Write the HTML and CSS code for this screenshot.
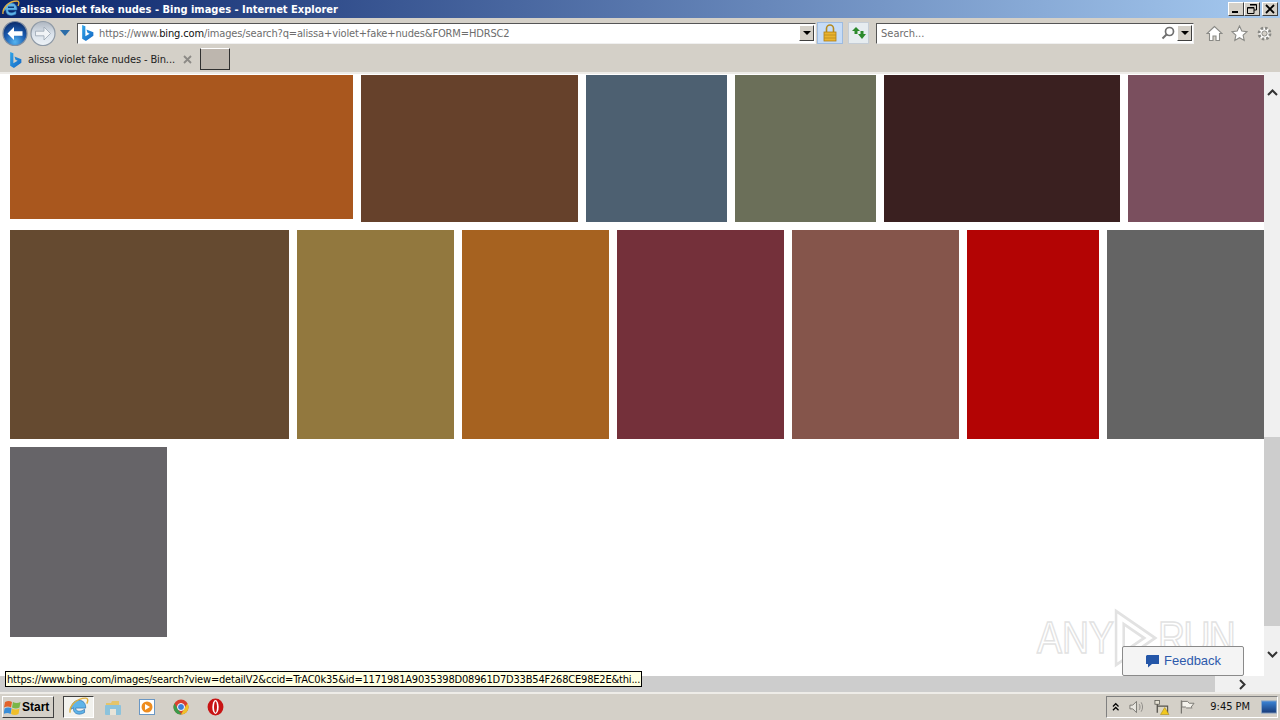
FILE: index.html
```html
<!DOCTYPE html>
<html lang="en">
<head>
<meta charset="utf-8">
<title>alissa violet fake nudes - Bing images - Internet Explorer</title>
<link rel="stylesheet" href="styles.css">
</head>
<body>
<div class="window">
  <header class="titlebar">
    <svg class="ie-small" width="18" height="18" viewBox="0 0 18 18"><path d="M2 11c0-5 3-8 7-8s6 3 6 6v1H6c0 3 4 4 8 1v3c-5 3-10 1-10-3 0-.5 0-1 .1-1.300z" fill="#5fb4e8" stroke="#2a6fb0" stroke-width=".6"/><path d="M1 14C0 8 7 1 15 1c2 0 2.500 2 1 5" fill="none" stroke="#e0b040" stroke-width="1.300"/><rect x="6" y="6.500" width="6" height="1.500" fill="#0a3a78"/></svg>
    <span class="title-text">alissa violet fake nudes - Bing images - Internet Explorer</span>
    <div class="win-btns">
      <button class="win-btn"><span class="g-min"></span></button>
      <button class="win-btn"><svg width="10" height="10" viewBox="0 0 10 10"><path d="M3 .5h6.500v5.500H7M.5 3.500H7V9.500H.5z" fill="none" stroke="#000" stroke-width="1"/><path d="M3 1h6.500M.5 4H7" stroke="#000" stroke-width="1"/></svg></button>
      <button class="win-btn win-close"><svg width="10" height="10" viewBox="0 0 10 10"><path d="M1 1l8 8M9 1l-8 8" stroke="#000" stroke-width="1.800"/></svg></button>
    </div>
  </header>

  <div class="navbar">
    <div class="nav-arrows">
      <svg class="nav-back" width="26" height="27" viewBox="0 0 26 27"><defs><radialGradient id="bk" cx=".5" cy=".85" r=".8"><stop offset="0" stop-color="#55b4f0"/><stop offset=".55" stop-color="#1b5cb0"/><stop offset="1" stop-color="#0c2f70"/></radialGradient></defs><circle cx="13" cy="13.500" r="12" fill="url(#bk)" stroke="#7f8da0" stroke-width="1.200"/><path d="M5.500 13.500l6.500-6.500v4.200h8.500v4.600H12V20z" fill="#fff"/></svg>
      <svg class="nav-fwd" width="26" height="27" viewBox="0 0 26 27"><defs><linearGradient id="fw" x1="0" y1="0" x2="0" y2="1"><stop offset="0" stop-color="#aeb6c0"/><stop offset=".5" stop-color="#d9e1ea"/><stop offset="1" stop-color="#eef3f7"/></linearGradient></defs><circle cx="13" cy="13.500" r="12" fill="url(#fw)" stroke="#8f9aa6" stroke-width="1.200"/><path d="M20.500 13.500L14 7v4.200H5.500v4.600H14V20z" fill="#f0f3f6" stroke="#9aa6b2" stroke-width=".8"/></svg>
      <svg class="nav-drop" width="10" height="6" viewBox="0 0 10 6"><path d="M0 0h10L5 6z" fill="#2b6ca8"/></svg>
    </div>
    <div class="addr">
      <svg class="bing" width="13" height="16" viewBox="0 0 12 15"><defs><linearGradient id="bg1" x1="0" y1="0" x2="1" y2="1"><stop offset="0" stop-color="#2fa4e8"/><stop offset="1" stop-color="#1668c4"/></linearGradient></defs><path d="M1 0l3 1.200v9.300l4-2.300-2-1-1-3 6.500 2.600v3.200L4.500 15 1 13z" fill="url(#bg1)"/></svg>
      <span class="url"><span class="dim">https://www.</span><span class="dark">bing.com</span><span class="dim">/images/search?q=alissa+violet+fake+nudes&amp;FORM=HDRSC2</span></span>
      <button class="drop-btn"><span class="tri"></span></button>
    </div>
    <div class="lock">
      <svg width="14" height="18" viewBox="0 0 14 18"><path d="M3.500 8V4.500a3.500 3.500 0 0 1 7 0V8" fill="none" stroke="#b48a20" stroke-width="1.600"/><rect x="1" y="8" width="12" height="9" fill="#eab32e" stroke="#b07e14" stroke-width=".8"/><path d="M1 11h12M1 14h12" stroke="#b98a1e" stroke-width=".8"/></svg>
    </div>
    <div class="refresh">
      <svg width="16" height="14" viewBox="0 0 16 14"><path d="M5 1L1 5h2.500v3h3V5H9z" fill="#2c8a2c"/><path d="M11 13l4-5h-2.500V5h-3v3H7z" fill="#2c8a2c"/></svg>
    </div>
    <div class="search">
      <span class="search-text">Search...</span>
      <svg class="mag" width="14" height="14" viewBox="0 0 14 14"><circle cx="8.500" cy="5.500" r="4" fill="none" stroke="#6f6f6f" stroke-width="1.700"/><path d="M5.500 8.500L1.500 12.500" stroke="#6f6f6f" stroke-width="2"/></svg>
      <button class="drop-btn"><span class="tri"></span></button>
    </div>
    <div class="tools">
      <svg width="17" height="17" viewBox="0 0 17 17"><path d="M8.500 1.500L1 8.500h2.500v7h3.500v-4.500h3v4.500h3.500v-7H16z" fill="#fff" stroke="#8a8a86" stroke-width="1.100"/></svg>
      <svg width="17" height="17" viewBox="0 0 17 17"><path d="M8.500 1l2.300 5 5.200.6-3.900 3.500 1.100 5.300-4.700-2.700-4.700 2.700 1.100-5.300L1 6.600 6.200 6z" fill="#fff" stroke="#8a8a86" stroke-width="1.100"/></svg>
      <svg width="17" height="17" viewBox="0 0 17 17"><circle cx="8.500" cy="8.500" r="5.500" fill="#fff" stroke="#8a8a86" stroke-width="2.800" stroke-dasharray="2.400 1.900"/><circle cx="8.500" cy="8.500" r="2.600" fill="#d4d0c8" stroke="#8a8a86"/></svg>
    </div>
  </div>

  <div class="tabbar">
    <div class="tab">
      <svg width="13" height="16" viewBox="0 0 12 15"><path d="M1 0l3 1.200v9.300l4-2.300-2-1-1-3 6.500 2.600v3.200L4.500 15 1 13z" fill="url(#bg1)"/></svg>
      <span class="tab-label">alissa violet fake nudes - Bin...</span>
      <svg class="tab-x" width="9" height="9" viewBox="0 0 9 9"><path d="M1 1l7 7M8 1l-7 7" stroke="#8c8a86" stroke-width="1.800"/></svg>
    </div>
    <div class="newtab"></div>
  </div>

  <main class="viewport">
    <div class="page">
      <div class="gallery">
        <div class="row row-a">
          <div class="tile t-short c1" style="width:343px"></div>
          <div class="tile c2" style="width:217px"></div>
          <div class="tile c3" style="width:141px"></div>
          <div class="tile c4" style="width:141px"></div>
          <div class="tile c5" style="width:236px"></div>
          <div class="tile c6" style="width:136px"></div>
        </div>
        <div class="row row-b">
          <div class="tile c7" style="width:279px"></div>
          <div class="tile c8" style="width:157px"></div>
          <div class="tile c9" style="width:147px"></div>
          <div class="tile c10" style="width:167px"></div>
          <div class="tile c11" style="width:167px"></div>
          <div class="tile c12" style="width:132px"></div>
          <div class="tile c13" style="width:157px"></div>
        </div>
        <div class="row row-c">
          <div class="tile c14" style="width:157px"></div>
        </div>
      </div>
      <div class="vscroll">
        <svg class="chev" width="11" height="7" viewBox="0 0 11 7"><path d="M1 6l4.500-4.500L10 6" fill="none" stroke="#333" stroke-width="2"/></svg>
        <div class="vtrack"><div class="vthumb"></div></div>
        <svg class="chev" width="11" height="7" viewBox="0 0 11 7"><path d="M1 1l4.500 4.500L10 1" fill="none" stroke="#333" stroke-width="2"/></svg>
      </div>
    </div>
    <div class="hscroll">
      <div class="hthumb"></div>
      <svg class="chev-r" width="7" height="11" viewBox="0 0 7 11"><path d="M1 1l4.500 4.500L1 10" fill="none" stroke="#333" stroke-width="2"/></svg>
    </div>
    <div class="statustip">https://www.bing.com/images/search?view=detailV2&amp;ccid=TrAC0k35&amp;id=1171981A9035398D08961D7D33B54F268CE98E2E&amp;thi...</div>
    <div class="watermark"><span>ANY</span><svg width="52" height="62" viewBox="0 0 52 62"><path d="M3 4l46 27L3 58zM12 17v28l24-14z" fill="none" stroke="#e2e2e2" stroke-width="3"/></svg><span class="wm-run">RUN</span></div>
    <div class="feedback">
      <svg width="15" height="14" viewBox="0 0 15 14"><path d="M2 1h12v9H7l-4 3.500V10H1V2z" fill="#2456a8"/></svg>
      <span>Feedback</span>
    </div>
  </main>

  <footer class="taskbar">
    <button class="start">
      <svg width="17" height="17" viewBox="0 0 17 17"><path d="M1 3c2.500-1.500 5-1.500 7 0l-1 5.500c-2-1.500-4.500-1.500-7 0z" fill="#e2632a"/><path d="M9 3c2 1.300 5 1.500 7.500 0l-1 5.500c-2.500 1.500-5 1.300-7.500 0z" fill="#7ab648"/><path d="M-.2 9.500c2.500-1.500 5-1.500 7 0l-1 5.500c-2-1.500-4.500-1.500-7 0z" transform="translate(.8)" fill="#3a8ed8"/><path d="M8 9.500c2 1.300 5 1.500 7.500 0l-1 5.500c-2.500 1.500-5 1.300-7.500 0z" fill="#f0bf2a"/></svg>
      <span>Start</span>
    </button>
    <div class="apps">
      <div class="app app-active">
        <svg width="20" height="20" viewBox="0 0 18 18"><path d="M2 11c0-5 3-8 7-8s6 3 6 6v1H6c0 3 4 4 8 1v3c-5 3-10 1-10-3 0-.5 0-1 .1-1.300z" fill="#5fb4e8" stroke="#2a6fb0" stroke-width=".6"/><path d="M1 14C0 8 7 1 15 1c2 0 2.500 2 1 5" fill="none" stroke="#e0b040" stroke-width="1.300"/></svg>
      </div>
      <div class="app">
        <svg width="18" height="17" viewBox="0 0 18 17"><path d="M2 4h5l1-2h7v4H2z" fill="#e5c469"/><rect x="1" y="6" width="16" height="10" rx="1" fill="#8cc3dc"/><rect x="6" y="10" width="6" height="6" fill="#e8e4d8"/></svg>
      </div>
      <div class="app">
        <svg width="16" height="16" viewBox="0 0 16 16"><rect x=".5" y=".5" width="15" height="15" fill="#fff" stroke="#6a97c4"/><circle cx="8" cy="8" r="5.500" fill="#ee8c1e"/><path d="M6 5l5 3-5 3z" fill="#fff"/></svg>
      </div>
      <div class="app">
        <svg width="16" height="16" viewBox="0 0 16 16"><circle cx="8" cy="8" r="7.500" fill="#d9402f"/><path d="M1.500 4.250L5 10.500 8.500 15.500A7.500 7.500 0 0 1 1.500 4.250z" fill="#3a9b4a"/><path d="M14.500 4.250A7.500 7.500 0 0 1 8 15.500L11 10z" fill="#eec22a"/><circle cx="8" cy="8" r="3.500" fill="#3b7fd8" stroke="#fff"/></svg>
      </div>
      <div class="app">
        <svg width="17" height="18" viewBox="0 0 16 17"><ellipse cx="8" cy="8.500" rx="7.500" ry="8" fill="#c81414"/><ellipse cx="8" cy="8.500" rx="3" ry="6.500" fill="#fff"/><ellipse cx="8" cy="8.500" rx="1.400" ry="5.500" fill="#c81414"/></svg>
      </div>
    </div>
    <div class="tray">
      <svg class="tray-up" width="8" height="10" viewBox="0 0 8 10"><path d="M1 4.500l3-3 3 3M1 8.500l3-3 3 3" fill="none" stroke="#000" stroke-width="1.300"/></svg>
      <svg width="16" height="14" viewBox="0 0 16 14"><path d="M1 5h3l4-4v12L4 9H1z" fill="#e8e6e0" stroke="#77756f"/><path d="M11 4c1 2 1 4 0 6M13 2c2 3 2 7 0 10" fill="none" stroke="#8c8a86"/></svg>
      <svg width="17" height="17" viewBox="0 0 17 17"><rect x="1" y="1" width="5" height="4" fill="#e6e2d4" stroke="#55534d" stroke-width=".8"/><path d="M3.500 5v9M3.500 7h11v8" fill="none" stroke="#55534d" stroke-width="1.400"/><rect x="5" y="8" width="9" height="7" fill="#dcd6c4"/><path d="M11.500 8.500l4.500 7.500H7z" fill="#f2c81e" stroke="#a88810" stroke-width=".6"/></svg>
      <svg width="16" height="16" viewBox="0 0 16 16"><path d="M1.500 1v14" stroke="#77756f" stroke-width="1.300"/><path d="M2 2h6l2 2h5l-3 4 1 1H7L6 8H2z" fill="#f4f2ec" stroke="#77756f"/></svg>
      <span class="clock">9:45 PM</span>
      <svg width="17" height="14" viewBox="0 0 17 14"><defs><linearGradient id="dk" x1="0" y1="0" x2="0" y2="1"><stop offset="0" stop-color="#3c86d8"/><stop offset="1" stop-color="#173a78"/></linearGradient></defs><rect x=".5" y=".5" width="16" height="13" fill="url(#dk)" stroke="#8fa8c4"/></svg>
    </div>
  </footer>
</div>
</body>
</html>
```
FILE: styles.css
```css
* { box-sizing: border-box; }
html, body { margin: 0; height: 100%; overflow: hidden; }
body { font-family: "DejaVu Sans", sans-serif; font-stretch: condensed; background: #d4d0c8; color: #000; }
button { margin: 0; padding: 0; font: inherit; }
.window { width: 1280px; height: 720px; display: flex; flex-direction: column; }

.titlebar { height: 18px; flex: none; display: flex; align-items: center; background: linear-gradient(90deg, #0a246a 0%, #a6caf0 100%); }
.ie-small { flex: none; margin: 0 0 0 2px; }
.title-text { font: bold condensed 11px/18px "DejaVu Sans", sans-serif; color: #fff; white-space: nowrap; flex: 1; padding-top: 1px; }
.win-btns { display: flex; margin-right: 2px; }
.win-btn { width: 16px; height: 14px; background: #d4d0c8; border: 1px solid; border-color: #fff #404040 #404040 #fff; display: flex; align-items: center; justify-content: center; }
.win-btns .win-btn:nth-child(3) { margin-left: 2px; }
.g-min { width: 6px; height: 2px; background: #000; margin: 6px 3px 0 0; }

.navbar { height: 29px; flex: none; display: flex; align-items: center; padding: 1px 0 0 2px; background: #d4d0c8; }
.nav-arrows { display: flex; align-items: center; width: 75px; flex: none; }
.nav-fwd { margin-left: 2px; }
.nav-drop { margin-left: 4px; }
.addr { width: 739px; height: 21px; flex: none; display: flex; align-items: center; background: #fff; border: 1px solid; border-color: #555 #f0f0f0 #f0f0f0 #555; padding-left: 3px; }
.bing { flex: none; }
.url { flex: 1; margin-left: 5px; padding-top: 1px; font: condensed 11px/16px "DejaVu Sans", sans-serif; letter-spacing: -.14px; white-space: nowrap; overflow: hidden; }
.dim { color: #6d6d6d; }
.dark { color: #111; }
.drop-btn { width: 15px; height: 16px; flex: none; background: #d4d0c8; border: 1px solid; border-color: #fff #404040 #404040 #fff; display: flex; align-items: center; justify-content: center; margin-right: 1px; }
.tri { width: 0; height: 0; border: 4px solid transparent; border-top: 4px solid #000; border-bottom: 0; }
.lock { width: 26px; height: 22px; flex: none; margin-left: 1px; display: flex; align-items: center; justify-content: center; background: #c6dcf7; border: 1px solid #9dbbe0; }
.refresh { width: 21px; height: 22px; flex: none; margin-left: 5px; display: flex; align-items: center; justify-content: center; background: #e6ecf0; border: 1px solid #c5cdd6; }
.search { width: 318px; height: 21px; flex: none; margin-left: 7px; display: flex; align-items: center; background: #fff; border: 1px solid; border-color: #555 #f0f0f0 #f0f0f0 #555; padding-left: 4px; }
.search-text { flex: 1; padding-top: 1px; font: condensed 11px/16px "DejaVu Sans", sans-serif; color: #6d6d6d; }
.mag { flex: none; margin-right: 2px; }
.tools { display: flex; align-items: center; gap: 8px; margin-left: 12px; flex: none; }

.tabbar { height: 25px; flex: none; display: flex; align-items: flex-start; padding-left: 3px; background: #d4d0c8; }
.tab { width: 197px; height: 25px; display: flex; align-items: center; padding-left: 6px; }
.tab-label { margin-left: 6px; width: 150px; padding-top: 1px; font: condensed 11px/16px "DejaVu Sans", sans-serif; letter-spacing: -.12px; color: #222; white-space: nowrap; }
.tab-x { flex: none; margin-left: 5px; }
.newtab { width: 30px; height: 22px; margin-top: 1px; background: #bdb6ae; border: 1px solid; border-color: #fff #303030 #303030 #303030; }

.viewport { flex: 1; position: relative; display: flex; flex-direction: column; background: #fff; min-height: 0; }
.page { flex: 1; display: flex; min-height: 0; }
.gallery { flex: 1; min-width: 0; padding: 3px 0 0 10px; display: flex; flex-direction: column; gap: 8px; overflow: hidden; border-top: 2px solid #eeece8; }
.row { display: flex; gap: 8px; flex: none; }
.row-a { height: 147px; margin-top: -2px; }
.row-b { height: 209px; }
.row-c { height: 190px; }
.t-short { height: 144px; }
.c1 { background: #a9571e; } .c2 { background: #66412b; } .c3 { background: #4d6071; }
.c4 { background: #6b6f59; } .c5 { background: #3a2020; } .c6 { background: #7a4f5e; }
.c7 { background: #654a30; } .c8 { background: #92783e; } .c9 { background: #a66220; }
.c10 { background: #74303a; } .c11 { background: #85554b; } .c12 { background: #b30404; }
.c13 { background: #646464; } .c14 { background: #666468; }

.vscroll { width: 16px; flex: none; display: flex; flex-direction: column; align-items: center; background: #f0f0f0; padding: 17px 0 18px; }
.vtrack { flex: 1; width: 100%; display: flex; flex-direction: column; justify-content: flex-end; padding-bottom: 25px; }
.vthumb { height: 189px; background: #cdcdcd; }
.chev { flex: none; }

.hscroll { height: 16px; flex: none; display: flex; align-items: center; background: #f0f0f0; }
.hthumb { width: 1215px; height: 100%; background: #cdcdcd; }
.chev-r { margin-left: 24px; }

.statustip { position: absolute; left: 5px; top: 599px; width: 637px; height: 16px; padding: 1px 0 0 1px; background: #ffffe1; border: 1px solid #000; font: condensed 11px/14px "DejaVu Sans", sans-serif; letter-spacing: -.19px; color: #000; white-space: nowrap; }
.watermark { position: absolute; left: 1037px; top: 535px; display: flex; align-items: center; font: 44px/62px "Liberation Sans", sans-serif; color: transparent; -webkit-text-stroke: 1.5px #e2e2e2; pointer-events: none; transform: scaleX(.85); transform-origin: left center; white-space: nowrap; }
.wm-run { letter-spacing: -2px; }
.feedback { position: absolute; left: 1122px; top: 574px; width: 122px; height: 30px; display: flex; align-items: center; gap: 4px; padding-left: 22px; background: #f4f4f4; border: 1px solid #8a8a8a; border-radius: 2px; font: 13px/16px "Liberation Sans", sans-serif; color: #2e5aac; }

.taskbar { height: 28px; flex: none; display: flex; align-items: center; background: #d4d0c8; border-top: 2px solid #eeece8; padding-left: 2px; }
.start { width: 52px; height: 22px; display: flex; align-items: center; gap: 1px; padding-left: 1px; background: #d4d0c8; border: 1px solid; border-color: #fff #404040 #404040 #fff; font: bold 12px/16px "Liberation Sans", sans-serif; }
.apps { display: flex; align-items: center; margin-left: 9px; }
.app { width: 34px; height: 22px; display: flex; align-items: center; justify-content: center; }
.app-active { width: 31px; background: #f2f2ee; border: 1px solid; border-color: #404040 #fff #fff #404040; margin-right: 2px; }
.tray { margin-left: auto; width: 172px; height: 22px; margin-right: 2px; display: flex; align-items: center; padding-left: 5px; gap: 10px; border: 1px solid; border-color: #808080 #fff #fff #808080; }
.clock { font: condensed 11px/14px "DejaVu Sans", sans-serif; margin: 0 1px 0 5px; color: #111; white-space: nowrap; }
```
